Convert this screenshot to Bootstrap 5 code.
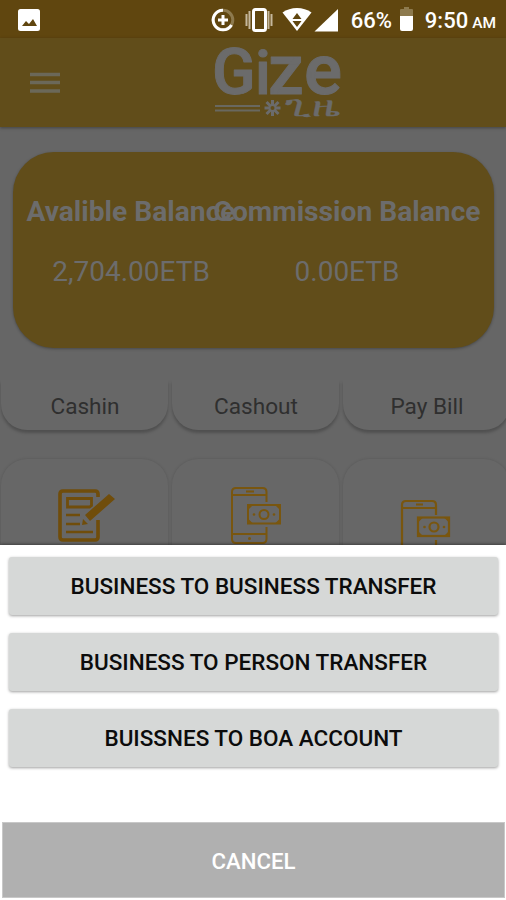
<!DOCTYPE html>
<html lang="en">
<head>
<meta charset="utf-8">
<meta name="viewport" content="width=device-width, initial-scale=1">
<title>Gize</title>
<link href="https://cdn.jsdelivr.net/npm/bootstrap@5.3.0/dist/css/bootstrap.min.css" rel="stylesheet">
<style>
body{font-family:Roboto,"Liberation Sans",sans-serif;background:#666;}
.screen{width:506px;height:900px;background:#666;}
.status-bar{height:38px;background:#60460f;color:#fff;padding:0 10px 0 17px;flex:none;}
.status-bar svg{display:block;flex:none;}
.status-text{font-size:22px;line-height:38px;font-weight:500;white-space:nowrap;padding-top:3px;}
.status-text .ampm{font-size:15.5px;line-height:1;margin-left:4px;}
.app-bar{height:89px;background:#614d1a;box-shadow:0 1px 3px rgba(0,0,0,.35);flex:none;padding:0 30px;}
.brand-logo{margin-left:152px;overflow:visible;}
.dashboard{height:418px;flex:none;}
.balance{height:196px;margin:25px 12px 0 13px;border-radius:41px;background:#614d1a;color:#6c6c6c;padding:0 0 0 10px;box-shadow:0 1px 3px rgba(0,0,0,.3);flex:none;}
.balance-col{width:216px;flex:none;white-space:nowrap;}
.balance-title{font-size:28.2px;line-height:34px;font-weight:700;margin-top:43px;}
.balance-value{font-size:28px;line-height:36px;margin-top:25px;}
.tiles{gap:4px;padding-left:1px;width:508px;}
.tile{width:167px;flex:none;background:#676767;}
.tiles-top{height:66px;margin-top:32px;flex:none;overflow:hidden;}
.tiles-top .tile{height:50px;border-radius:0 0 26px 26px;box-shadow:0 3px 3px rgba(0,0,0,.22);font-size:22.6px;line-height:54px;color:#2f2f2f;text-align:center;padding-left:1px;}
.tiles-bottom{padding-top:13px;flex:1;overflow:hidden;}
.tiles-bottom .tile{height:110px;border-radius:26px 26px 0 0;box-shadow:0 0 3px rgba(0,0,0,.15);}
.tile-icon{display:block;}
.sheet{height:355px;background:#fff;padding:12px 8px 0 9px;box-shadow:0 -1px 3px rgba(0,0,0,.4);z-index:1;flex:none;}
.actions{row-gap:18px;}
.sheet .btn-action{height:58px;border:0;border-radius:3px;background:#d6d8d7;color:#0c0c0c;font-size:22.5px;font-weight:500;box-shadow:0 1px 3px rgba(0,0,0,.38);padding:2px 0 0;}
.sheet .btn-cancel{height:76px;margin:55px -7px 0 -7px;border:1px solid #c8c8c8;border-radius:0;background:#b0b0b0;color:#fff;font-size:22.2px;font-weight:500;padding:3px 0 0;}
</style>
</head>
<body>
<main class="screen d-flex flex-column overflow-hidden">
  <div class="status-bar d-flex align-items-center">
    <svg width="24" height="38" viewBox="0 0 24 38"><rect x="1" y="9" width="22" height="22" rx="2.5" fill="#fff"/><path d="M5 26l4-5 3 3 4-5 4 7z" fill="#60460f"/></svg>
    <svg class="ms-auto" width="141" height="38" viewBox="0 0 141 38">
      <g fill="none" stroke-width="3"><circle cx="13" cy="20" r="9.800" stroke="#8d7a4e"/><path d="M13 10.200a9.800 9.800 0 1 0 8.500 14.700" stroke="#fff"/><path d="M13 15v10M8 20h10" stroke="#fff"/></g>
      <path d="M36.500 14v12M61.500 14v12" stroke="#c5b89d" stroke-width="2"/><path d="M39.500 11v18M58.500 11v18" stroke="#c5b89d" stroke-width="2"/><rect x="43.500" y="9.500" width="12" height="21" rx="2" fill="none" stroke="#fff" stroke-width="3"/>
      <path d="M72.500 12.500c8-6 21-6 29 0L87 31z" fill="#fff"/><path d="M82.500 19l4.500-6 4.500 6zM82.500 21h9L87 27z" fill="#60460f"/>
      <path d="M104.500 31.500L128 9v22.500z" fill="#fff"/>
    </svg>
    <span class="status-text">66%</span>
    <svg class="mx-2" width="13" height="38" viewBox="0 0 13 38"><path d="M4 7h5v2h3q1 0 1 1v7H0v-7q0-1 1-1h3z" fill="#8d7a4e"/><path d="M0 16h13v13q0 2-2 2H2q-2 0-2-2z" fill="#fff"/></svg>
    <span class="status-text ms-1">9:50<span class="ampm">AM</span></span>
  </div>

  <header class="app-bar d-flex align-items-center">
    <svg width="31" height="24" viewBox="0 0 31 24"><path d="M0 3.500h30M0 11.500h30M0 20h30" stroke="#6b6859" stroke-width="3.600"/></svg>
    <svg class="brand-logo" width="132" height="80" viewBox="0 0 132 80">
      <g fill="#6b6b6b" stroke="#6b6b6b" stroke-width="1" font-family="Roboto, sans-serif" font-weight="500">
        <text y="51" stroke-linejoin="round"><tspan x="-1" font-size="64">G</tspan><tspan x="42" font-size="62">i</tspan><tspan x="55" font-size="71">z</tspan><tspan x="91" font-size="71">e</tspan></text>
        <text x="72" y="73" font-size="29" stroke-width=".3" textLength="55" lengthAdjust="spacingAndGlyphs">ጊዜ</text>
      </g>
      <path d="M2 63h45M2 67.500h45" stroke="#69685f" stroke-width="2.200"/>
      <path d="M59.500 57v16M51.500 65h16M53.500 59l12 12M65.500 59L53.500 71" stroke="#6b6b6b" stroke-width="3"/><circle cx="59.500" cy="65" r="2" fill="#614d1a"/>
    </svg>
  </header>

  <section class="dashboard d-flex flex-column">
    <div class="balance d-flex">
      <div class="balance-col">
        <div class="balance-title d-flex justify-content-center">Avalible Balance</div>
        <div class="balance-value text-center">2,704.00ETB</div>
      </div>
      <div class="balance-col">
        <div class="balance-title d-flex justify-content-center">Commission Balance</div>
        <div class="balance-value text-center">0.00ETB</div>
      </div>
    </div>
    <div class="tiles tiles-top d-flex">
      <div class="tile">Cashin</div>
      <div class="tile">Cashout</div>
      <div class="tile">Pay Bill</div>
    </div>
    <div class="tiles tiles-bottom d-flex">
      <div class="tile">
        <svg class="tile-icon" width="167" height="86" viewBox="1 459 167 86">
          <g fill="none" stroke="#704d0b" stroke-width="3.600"><path d="M98 497v-3q0-3-3-3H63q-3 0-3 3v43q0 3 3 3h32q3 0 3-3v-17"/><path d="M67.500 498.500h24v7l-2 1.500h-22z" stroke-width="2.800"/><path d="M66 515h14M66 524h14M66 532h27" stroke-width="2.600"/></g>
          <path d="M109 494l6 5-25 22-5-6zM83 519l5 5-6 1z" fill="#704d0b"/>
        </svg>
      </div>
      <div class="tile">
        <svg class="tile-icon" width="167" height="86" viewBox="172 459 167 86">
          <g fill="none" stroke="#79560f" stroke-width="2"><path d="M266.500 502v-10q0-4-4-4H236q-4 0-4 4v47q0 4 4 4h26.500q4 0 4-4v-12M232 495h34.500M232 534h34.500M246 491.500h8"/><rect x="248" y="505" width="32" height="18.500"/><circle cx="264" cy="514.500" r="4.500"/></g>
          <g fill="#79560f"><circle cx="249.500" cy="538.500" r="1.500"/><circle cx="254" cy="514.500" r="1.300"/><circle cx="274" cy="514.500" r="1.300"/><path d="M248 505h5l-5 5zM280 505h-5l5 5zM248 523.500v-5l5 5zM280 523.500v-5l-5 5z"/></g>
        </svg>
      </div>
      <div class="tile">
        <svg class="tile-icon" width="167" height="86" viewBox="343 459 167 86">
          <g fill="none" stroke="#79560f" stroke-width="2.200"><path d="M436 515v-10q0-4-4-4h-26q-4 0-4 4v41M436 540v7M402 508h34M416 504.500h7"/><rect x="418" y="517.500" width="31" height="18.500"/><circle cx="434" cy="527" r="4.500"/></g>
          <g fill="#79560f"><circle cx="424.500" cy="527" r="1.300"/><circle cx="444" cy="527" r="1.300"/><path d="M418 517.500h5l-5 5zM449 517.500h-5l5 5zM418 536v-5l5 5zM449 536v-5l-5 5z"/></g>
        </svg>
      </div>
    </div>
  </section>

  <section class="sheet">
    <div class="d-grid actions">
      <button class="btn btn-action" type="button">BUSINESS TO BUSINESS TRANSFER</button>
      <button class="btn btn-action" type="button">BUSINESS TO PERSON TRANSFER</button>
      <button class="btn btn-action" type="button">BUISSNES TO BOA ACCOUNT</button>
    </div>
    <div class="d-grid"><button class="btn btn-cancel" type="button">CANCEL</button></div>
  </section>
</main>
<script src="https://cdn.jsdelivr.net/npm/bootstrap@5.3.0/dist/js/bootstrap.bundle.min.js"></script>
</body>
</html>
